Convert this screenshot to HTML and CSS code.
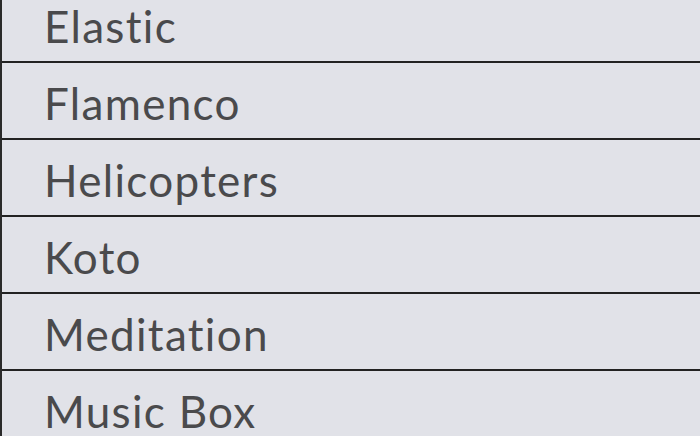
FILE: index.html
```html
<!DOCTYPE html>
<html lang="en">
<head>
    <meta charset="UTF-8">
    <title>Sounds</title>
    <link rel="stylesheet" href="styles.css">
</head>
<body>
    <ul class="sound-list">
        <li class="sound-item">Elastic</li>
        <li class="sound-item">Flamenco</li>
        <li class="sound-item">Helicopters</li>
        <li class="sound-item">Koto</li>
        <li class="sound-item">Meditation</li>
        <li class="sound-item">Music Box</li>
    </ul>
</body>
</html>
```

FILE: styles.css
```css
body {
    margin: 0;
    padding: 0;
    background-color: #e1e2e8;
    font-family: Lato, "Open Sans", sans-serif;
    overflow: hidden;
}
.sound-list {
    list-style: none;
    margin: -14px 0 0 0;
    padding: 0;
    border-left: 2px solid #2a2a2a;
}
.sound-item {
    box-sizing: border-box;
    height: 77px;
    padding: 10px 0 0 42px;
    font-size: 44px;
    line-height: 60px;
    letter-spacing: 1.3px;
    font-variant-ligatures: none;
    color: #4a4a4c;
    border-bottom: 2px solid #222;
}
```
